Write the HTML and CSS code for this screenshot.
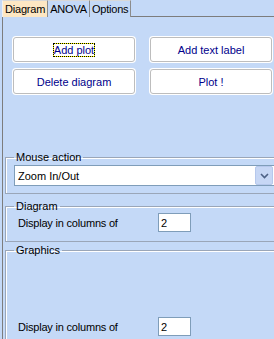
FILE: index.html
```html
<!DOCTYPE html>
<html lang="en">
<head>
  <meta charset="UTF-8" />
  <title>Diagram options</title>
  <link rel="stylesheet" href="styles.css">
</head>
<body>
  <div class="tabs">
    <div class="tab active">Diagram</div>
    <div class="tab">ANOVA</div>
    <div class="tab">Options</div>
    <div class="tab-rest"></div>
  </div>

  <div class="panel">
    <div class="buttons">
      <button class="btn"><span class="focus">Add plot</span></button>
      <button class="btn">Add text label</button>
      <button class="btn">Delete diagram</button>
      <button class="btn">Plot !</button>
    </div>

    <fieldset class="group mouse">
      <legend>Mouse action</legend>
      <div class="select">
        <span>Zoom In/Out</span>
        <span class="drop">
          <svg width="9" height="6" viewBox="0 0 9 6"><path d="M1 1 L4.5 4.5 L8 1" fill="none" stroke="#4d6185" stroke-width="1.6"/></svg>
        </span>
      </div>
    </fieldset>

    <fieldset class="group diagram">
      <legend>Diagram</legend>
      <div class="row">
        <span class="label">Display in columns of</span>
        <input class="num" type="text" value="2">
      </div>
    </fieldset>

    <fieldset class="group graphics">
      <legend>Graphics</legend>
      <div class="row">
        <span class="label">Display in columns of</span>
        <input class="num" type="text" value="2">
      </div>
    </fieldset>
  </div>
</body>
</html>
```

FILE: styles.css
```css
body {
  margin: 0;
  background: #c4d9f7;
  font-family: "Liberation Sans", Arial, sans-serif;
  font-size: 10.5px;
  color: #000;
  overflow: hidden;
  height: 339px;
}

.tabs {
  display: flex;
  height: 17px;
}

.tab {
  padding: 0 2px;
  line-height: 17px;
  font-size: 11px;
  letter-spacing: -0.2px;
  border-right: 1px solid #8c8c8c;
  border-top: 1px solid #d8d8d8;
}

.tab.active {
  background: #fde7c3;
  margin-left: 2px;
  border-left: 1px solid #f0f0f0;
}

.tab-rest {
  flex: 1;
  border-bottom: 1px solid #7d7d7d;
}

.panel {
  box-sizing: border-box;
  margin-left: 2px;
  border-left: 1px solid #7d7d7d;
  height: 322px;
  padding-top: 20px;
  overflow: hidden;
}

.buttons {
  display: grid;
  grid-template-columns: 122px 122px;
  column-gap: 15px;
  row-gap: 7px;
  padding-left: 10px;
}

.btn {
  height: 25px;
  background: #fff;
  border: 1px solid #bdbdbd;
  border-radius: 3px;
  box-shadow: 0 0 0 1px #fff;
  font-family: inherit;
  font-size: 11px;
  color: #00008b;
  padding: 0;
}

.focus {
  outline: 1px dotted #000;
  box-shadow: 0 0 0 1px #ffff00;
}

.group {
  margin: 0 0 0 2px;
  padding: 0 0 0 8px;
  border: 1px solid #9aa6b8;
  border-right: none;
  box-shadow: inset 1px 1px 0 #fff;
}

.group legend {
  padding: 0 2px;
  font-size: 11px;
}

.mouse {
  margin-top: 57px;
  padding-bottom: 7px;
}

.select {
  display: flex;
  align-items: center;
  justify-content: space-between;
  width: 256px;
  height: 19px;
  margin-top: 2px;
  background: #fff;
  border: 1px solid #7f9db9;
  padding-left: 3px;
  font-size: 11px;
}

.drop {
  width: 16px;
  height: 17px;
  margin-right: 1px;
  background: #c7d7f5;
  border: 1px solid #b6c8ec;
  border-radius: 2px;
  display: flex;
  align-items: center;
  justify-content: center;
}

.row {
  display: flex;
  align-items: center;
  height: 21px;
  padding-left: 4px;
}

.label {
  width: 140px;
  font-size: 11px;
  letter-spacing: -0.2px;
}

.num {
  width: 27px;
  height: 15px;
  padding: 1px 2px;
  border: 1px solid #7f9db9;
  font-family: inherit;
  font-size: 11px;
}

.diagram {
  margin-top: 6px;
  padding-bottom: 8px;
}

.graphics {
  margin-top: 2px;
  height: 120px;
}

.graphics .row {
  margin-top: 60px;
}
```
